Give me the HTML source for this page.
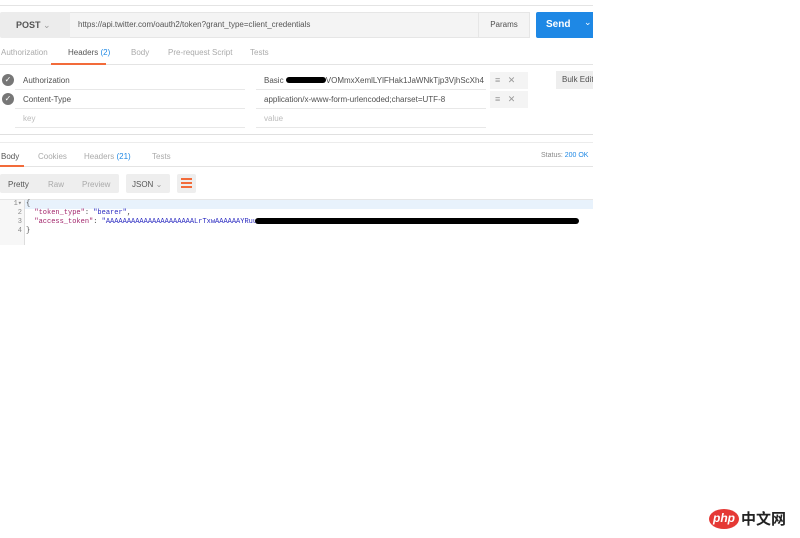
<!DOCTYPE html><html><head><style>
body{margin:0;width:800px;height:538px;background:#fff;font-family:"Liberation Sans",sans-serif;font-size:8px;color:#505050;position:relative;overflow:hidden}
.a{position:absolute}
.tab{position:absolute;top:48px;font-size:8px;color:#aaa}
</style></head><body>
<div class="a" style="left:0;top:5px;width:593px;height:1px;background:#e4e4e4"></div>
<div class="a" style="left:0;top:12px;width:70px;height:26px;background:#ececec;border-radius:2px 0 0 2px"></div>
<div class="a" style="left:16px;top:20px;font-size:9px;color:#555;font-weight:bold">POST <span style="font-weight:normal;color:#999">&#8964;</span></div>
<div class="a" style="left:70px;top:12px;width:408px;height:26px;background:#f4f4f4;border-top:1px solid #e6e6e6;border-bottom:1px solid #e6e6e6;box-sizing:border-box"></div>
<div class="a" style="left:78px;top:20px;color:#555">https://api.twitter.com/oauth2/token?grant_type=client_credentials</div>
<div class="a" style="left:478px;top:12px;width:52px;height:26px;background:#f4f4f4;border:1px solid #e6e6e6;box-sizing:border-box;text-align:center;line-height:24px">Params</div>
<div class="a" style="left:536px;top:12px;width:57px;height:26px;background:#1e88e5;border-radius:2px 0 0 2px"></div>
<div class="a" style="left:546px;top:19px;color:#fff;font-weight:bold;font-size:10px">Send</div>
<div class="a" style="left:584px;top:17px;color:#fff;font-size:9px">&#8964;</div>
<div class="tab" style="left:1px">Authorization</div>
<div class="tab" style="left:68px;color:#555">Headers <span style="color:#1e88e5">(2)</span></div>
<div class="tab" style="left:131px">Body</div>
<div class="tab" style="left:168px">Pre-request Script</div>
<div class="tab" style="left:250px">Tests</div>
<div class="a" style="left:0;top:64px;width:593px;height:1px;background:#e4e4e4"></div>
<div class="a" style="left:51px;top:63px;width:55px;height:2px;background:#f26b3a"></div>
<!-- header rows -->
<div class="a" style="left:2px;top:74px;width:12px;height:12px;border-radius:50%;background:#777;color:#fff;font-size:8px;text-align:center;line-height:12px">✓</div>
<div class="a" style="left:2px;top:93px;width:12px;height:12px;border-radius:50%;background:#777;color:#fff;font-size:8px;text-align:center;line-height:12px">✓</div>
<div class="a" style="left:23px;top:76px">Authorization</div>
<div class="a" style="left:23px;top:95px">Content-Type</div>
<div class="a" style="left:23px;top:114px;color:#bbb">key</div>
<div class="a" style="left:264px;top:76px">Basic <span style="display:inline-block;width:40px;height:6px;background:#000;border-radius:3px"></span>VOMmxXemlLYlFHak1JaWNkTjp3VjhScXh4</div>
<div class="a" style="left:264px;top:95px">application/x-www-form-urlencoded;charset=UTF-8</div>
<div class="a" style="left:264px;top:114px;color:#bbb">value</div>
<div class="a" style="left:15px;top:89px;width:230px;height:1px;background:#e8e8e8"></div>
<div class="a" style="left:15px;top:108px;width:230px;height:1px;background:#e8e8e8"></div>
<div class="a" style="left:15px;top:127px;width:230px;height:1px;background:#e8e8e8"></div>
<div class="a" style="left:256px;top:89px;width:230px;height:1px;background:#e8e8e8"></div>
<div class="a" style="left:256px;top:108px;width:230px;height:1px;background:#e8e8e8"></div>
<div class="a" style="left:256px;top:127px;width:230px;height:1px;background:#e8e8e8"></div>
<div class="a" style="left:490px;top:72px;width:38px;height:17px;background:#f4f4f4;color:#999;font-size:9px;line-height:17px">&nbsp;&nbsp;≡&nbsp;&nbsp;&nbsp;✕</div>
<div class="a" style="left:490px;top:91px;width:38px;height:17px;background:#f4f4f4;color:#999;font-size:9px;line-height:17px">&nbsp;&nbsp;≡&nbsp;&nbsp;&nbsp;✕</div>
<div class="a" style="left:556px;top:71px;width:37px;height:18px;background:#eee;line-height:18px;padding-left:6px;box-sizing:border-box;white-space:nowrap;overflow:hidden">Bulk Edit</div>
<div class="a" style="left:0;top:134px;width:593px;height:1px;background:#e0e0e0"></div>
<div class="a" style="left:0;top:142px;width:593px;height:1px;background:#ececec"></div>
<!-- response tabs -->
<div class="a" style="left:1px;top:152px;color:#555">Body</div>
<div class="a" style="left:38px;top:152px;color:#aaa">Cookies</div>
<div class="a" style="left:84px;top:152px;color:#aaa">Headers <span style="color:#1e88e5">(21)</span></div>
<div class="a" style="left:152px;top:152px;color:#aaa">Tests</div>
<div class="a" style="left:541px;top:152px;font-size:7px;color:#888">Status: <span style="color:#1e88e5">200 OK</span></div>
<div class="a" style="left:0;top:166px;width:593px;height:1px;background:#e4e4e4"></div>
<div class="a" style="left:0;top:165px;width:24px;height:2px;background:#f26b3a"></div>
<div class="a" style="left:0;top:174px;width:119px;height:19px;background:#eee;border-radius:2px"></div>
<div class="a" style="left:8px;top:180px;color:#555">Pretty</div>
<div class="a" style="left:48px;top:180px;color:#aaa">Raw</div>
<div class="a" style="left:82px;top:180px;color:#aaa">Preview</div>
<div class="a" style="left:126px;top:174px;width:44px;height:19px;background:#eee;border-radius:2px"></div>
<div class="a" style="left:132px;top:180px;color:#555">JSON <span style="color:#999">&#8964;</span></div>
<div class="a" style="left:177px;top:174px;width:19px;height:19px;background:#eee;border-radius:2px"></div>
<div class="a" style="left:181px;top:178px;width:11px;height:1.5px;background:#f26b3a;box-shadow:0 4px 0 #f26b3a,0 8px 0 #f26b3a"></div>
<!-- code -->
<div class="a" style="left:0;top:199px;width:593px;height:1px;background:#e6e6e6"></div>
<div class="a" style="left:24px;top:200px;width:569px;height:9px;background:#e8f2fc"></div>
<div class="a" style="left:0;top:200px;width:24px;height:45px;background:#f7f7f7;border-right:1px solid #ddd"></div>
<div class="a" style="left:0;top:200px;font-family:'Liberation Mono',monospace;font-size:7px;line-height:9px;color:#888;width:22px;text-align:right">1▾<br>2<br>3<br>4</div>
<div class="a" style="left:26px;top:200px;font-family:'Liberation Mono',monospace;font-size:7px;line-height:9px;color:#444;white-space:pre">{
  <span style="color:#a2256b">"token_type"</span>: <span style="color:#2a2ac0">"bearer"</span>,
  <span style="color:#a2256b">"access_token"</span>: <span style="color:#2a2ac0">"AAAAAAAAAAAAAAAAAAAAALrTxwAAAAAAYRuu</span>
}</div>
<div class="a" style="left:255px;top:218px;width:324px;height:6px;background:#000;border-radius:3px"></div>
<!-- logo -->
<div class="a" style="left:709px;top:509px;width:30px;height:20px;background:#e53935;border-radius:50%;color:#fff;font-style:italic;font-weight:bold;font-size:12px;text-align:center;line-height:18px">php</div>
<div class="a" style="left:741px;top:508px;font-family:'Noto Sans CJK SC',sans-serif;font-size:15px;color:#222;font-weight:bold">中文网</div>
</body></html>
